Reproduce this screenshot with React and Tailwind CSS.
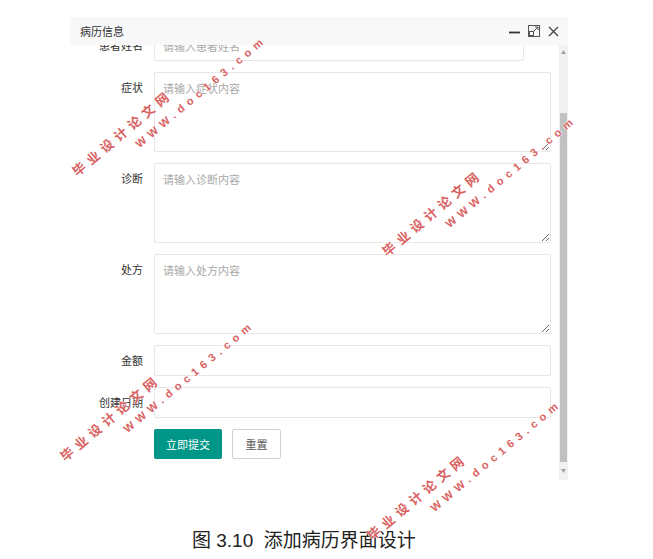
import React from 'react';

function Watermark({ className }) {
  return (
    <div
      className={
        'pointer-events-none absolute origin-top-left rotate-[-40deg] font-bold text-[#d96262] [text-shadow:0_0_1px_#fff,0_0_2px_#fff] ' +
        className
      }
    >
      <div className="whitespace-nowrap text-[13px] leading-[16px] tracking-[5px]">毕业设计论文网</div>
      <div className="ml-[66px] mt-[4px] whitespace-nowrap font-['Liberation_Sans',sans-serif] text-[11px] leading-[14px] tracking-[5px]">
        WWW.doc163.com
      </div>
    </div>
  );
}

function Row({ label, children }) {
  return (
    <div className="flex gap-[11px]">
      <div className="flex h-[31px] w-[73px] shrink-0 items-center justify-end whitespace-nowrap text-[11px] text-[#333]">
        {label}
      </div>
      {children}
    </div>
  );
}

function Input({ placeholder, width = 'w-[397px]' }) {
  return (
    <input
      className={
        'h-[31px] rounded-[2px] border border-[#e6e6e6] bg-white px-[8px] text-[11px] outline-none placeholder:text-[#a9a9a9] ' +
        width
      }
      placeholder={placeholder}
    />
  );
}

function Area({ placeholder }) {
  return (
    <textarea
      className="h-[80px] w-[397px] rounded-[2px] border border-[#e6e6e6] bg-white px-[8px] pt-[7px] text-[11px] leading-[16px] outline-none placeholder:text-[#a9a9a9]"
      placeholder={placeholder}
    />
  );
}

export default function App() {
  return (
    <div className="relative h-[559px] w-[653px] overflow-hidden bg-white font-['Noto_Sans_CJK_SC',sans-serif]">
      <div className="ml-[70px] w-[498px] pt-[17px]">
        {/* title bar */}
        <div className="flex h-[28px] items-center justify-between bg-[#f8f8f8] pl-[10px] pr-[9px]">
          <span className="text-[11px] text-[#333]">病历信息</span>
          <div className="flex items-center gap-[8px]">
            <svg width="11" height="11" viewBox="0 0 11 11">
              <path d="M0 6.5h11" stroke="#333" strokeWidth="1.8" />
            </svg>
            <svg width="12" height="12" viewBox="0 0 12 12" fill="none" stroke="#555" strokeWidth="1">
              <rect x="0.5" y="0.5" width="11" height="11" />
              <rect x="1.5" y="6.5" width="4" height="4" />
              <path d="M6 6L10 2M7 2h3v3" />
            </svg>
            <svg width="11" height="11" viewBox="0 0 11 11" stroke="#444" strokeWidth="1.3">
              <path d="M1 1l9 9M10 1l-9 9" />
            </svg>
          </div>
        </div>

        {/* body */}
        <div className="flex h-[435px]">
          <div className="flex-1 overflow-hidden">
            <div className="-mt-[15px] flex flex-col gap-[11px]">
              <Row label="患者姓名">
                <Input placeholder="请输入患者姓名" width="w-[370px]" />
              </Row>
              <Row label="症状">
                <Area placeholder="请输入症状内容" />
              </Row>
              <Row label="诊断">
                <Area placeholder="请输入诊断内容" />
              </Row>
              <Row label="处方">
                <Area placeholder="请输入处方内容" />
              </Row>
              <Row label="金额">
                <Input />
              </Row>
              <Row label="创建日期">
                <Input />
              </Row>
              <div className="flex gap-[10px] pl-[84px]">
                <button className="h-[30px] w-[68px] rounded-[2px] bg-[#009688] text-[11px] text-white">立即提交</button>
                <button className="h-[30px] w-[49px] rounded-[2px] border border-[#d2d2d2] bg-white text-[11px] text-[#555]">
                  重置
                </button>
              </div>
            </div>
          </div>

          {/* scrollbar */}
          <div className="flex w-[9px] flex-col bg-[#f1f1f1]">
            <div className="flex h-[68px] justify-center pt-[5px]">
              <svg width="5" height="4" viewBox="0 0 5 4">
                <path d="M2.5 0L5 4H0z" fill="#a3a3a3" />
              </svg>
            </div>
            <div className="mx-[1px] h-[349px] bg-[#c1c1c1]" />
            <div className="flex flex-1 items-center justify-center">
              <svg width="5" height="4" viewBox="0 0 5 4">
                <path d="M0 0h5L2.5 4z" fill="#a3a3a3" />
              </svg>
            </div>
          </div>
        </div>
      </div>

      <p className="ml-[192px] mt-[49px] whitespace-nowrap font-['Liberation_Sans','Noto_Sans_CJK_SC',sans-serif] text-[19px] leading-[24px] text-[#222]">
        图 3.10&nbsp;&nbsp;添加病历界面设计
      </p>

      <Watermark className="left-[69px] top-[167px]" />
      <Watermark className="left-[379px] top-[247px]" />
      <Watermark className="left-[57px] top-[452px]" />
      <Watermark className="left-[364px] top-[531px]" />
    </div>
  );
}
